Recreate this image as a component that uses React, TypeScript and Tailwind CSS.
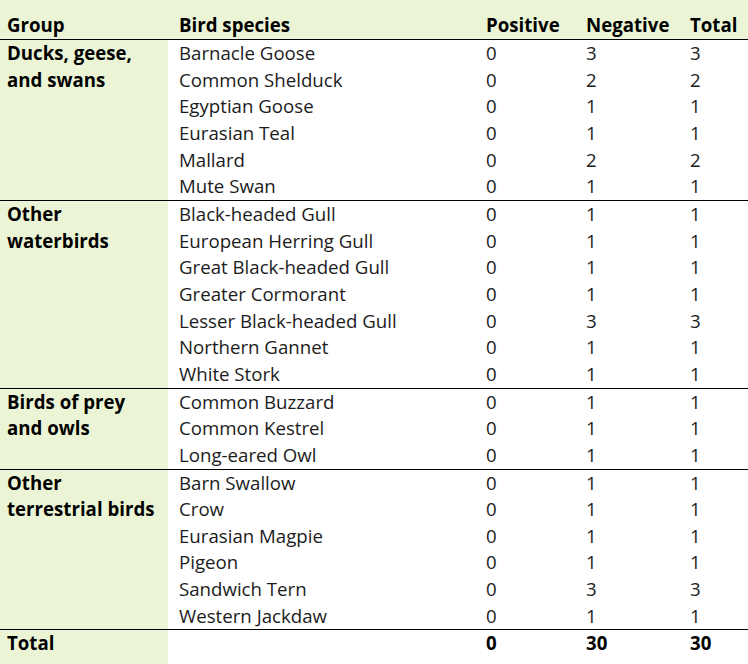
import React from "react";

type Row = [string, number, number, number];
const groups: { name: string[]; rows: Row[] }[] = [
  {
    name: ["Ducks, geese,", "and swans"],
    rows: [
      ["Barnacle Goose", 0, 3, 3],
      ["Common Shelduck", 0, 2, 2],
      ["Egyptian Goose", 0, 1, 1],
      ["Eurasian Teal", 0, 1, 1],
      ["Mallard", 0, 2, 2],
      ["Mute Swan", 0, 1, 1],
    ],
  },
  {
    name: ["Other", "waterbirds"],
    rows: [
      ["Black-headed Gull", 0, 1, 1],
      ["European Herring Gull", 0, 1, 1],
      ["Great Black-headed Gull", 0, 1, 1],
      ["Greater Cormorant", 0, 1, 1],
      ["Lesser Black-headed Gull", 0, 3, 3],
      ["Northern Gannet", 0, 1, 1],
      ["White Stork", 0, 1, 1],
    ],
  },
  {
    name: ["Birds of prey", "and owls"],
    rows: [
      ["Common Buzzard", 0, 1, 1],
      ["Common Kestrel", 0, 1, 1],
      ["Long-eared Owl", 0, 1, 1],
    ],
  },
  {
    name: ["Other", "terrestrial birds"],
    rows: [
      ["Barn Swallow", 0, 1, 1],
      ["Crow", 0, 1, 1],
      ["Eurasian Magpie", 0, 1, 1],
      ["Pigeon", 0, 1, 1],
      ["Sandwich Tern", 0, 3, 3],
      ["Western Jackdaw", 0, 1, 1],
    ],
  },
];

export default function App() {
  return (
    <div
      className="w-[748px] h-[664px] overflow-hidden bg-white text-[18.67px] text-[#1c1c1c]"
      style={{ fontFamily: '"Open Sans", "Noto Sans", sans-serif' }}
    >
      <div className="flex h-[40px] items-end border-b border-black bg-[#ebf5d5] font-bold text-black leading-[26.67px]">
        <div className="w-[168px] pl-[7px]">Group</div>
        <div className="w-[307px] pl-[11px]">Bird species</div>
        <div className="w-[100px] pl-[11px]">Positive</div>
        <div className="w-[104px] pl-[11px]">Negative</div>
        <div className="flex-1 pl-[11px]">Total</div>
      </div>
      {groups.map((g, gi) => (
        <div key={gi} className="flex border-b border-black">
          <div className="w-[168px] shrink-0 bg-[#ebf5d5] pl-[7px] font-bold text-black leading-[26.67px]">
            {g.name.map((n) => (
              <div key={n}>{n}</div>
            ))}
          </div>
          <div className="flex flex-1 flex-col">
            {g.rows.map((r) => (
              <div key={r[0]} className="flex h-[26.67px] items-center leading-[26.67px]">
                <div className="w-[307px] pl-[11px]">{r[0]}</div>
                <div className="w-[100px] pl-[11px]">{r[1]}</div>
                <div className="w-[104px] pl-[11px]">{r[2]}</div>
                <div className="flex-1 pl-[11px]">{r[3]}</div>
              </div>
            ))}
          </div>
        </div>
      ))}
      <div className="flex h-[40px] font-bold text-black leading-[26.67px]">
        <div className="w-[168px] bg-[#ebf5d5] pl-[7px]">Total</div>
        <div className="w-[307px] pl-[11px]"></div>
        <div className="w-[100px] pl-[11px]">0</div>
        <div className="w-[104px] pl-[11px]">30</div>
        <div className="flex-1 pl-[11px]">30</div>
      </div>
    </div>
  );
}
